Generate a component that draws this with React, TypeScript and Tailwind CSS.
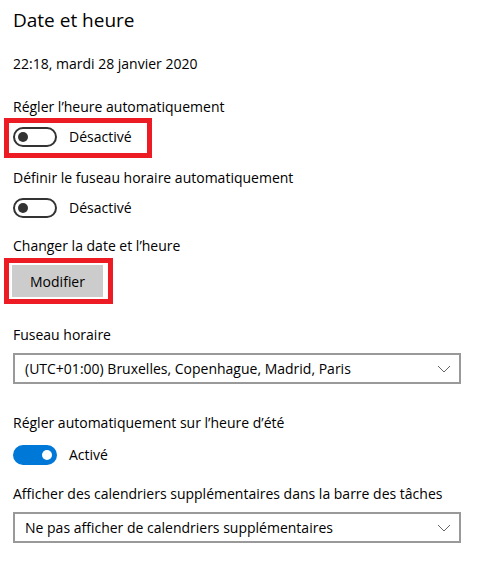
import { ReactNode } from 'react'

const FONT = "font-['Open_Sans','Noto_Sans',sans-serif]"

function Toggle({ on }: { on: boolean }) {
  return (
    <div className="flex h-5 items-center gap-3">
      {on ? (
        <div className="flex h-5 w-11 items-center justify-end rounded-full bg-[#0078d7] pr-[5px]">
          <div className="h-[10px] w-[10px] rounded-full bg-white" />
        </div>
      ) : (
        <div className="flex h-5 w-11 items-center rounded-full border-2 border-[#333] pl-[3px]">
          <div className="h-[10px] w-[10px] rounded-full bg-[#333]" />
        </div>
      )}
      <span className="text-[14px] leading-5 text-black">{on ? 'Activé' : 'Désactivé'}</span>
    </div>
  )
}

function Label({ children, mt }: { children: ReactNode; mt: string }) {
  return <div className={`${mt} text-[14px] leading-5 text-black`}>{children}</div>
}

function Select({ value }: { value: string }) {
  return (
    <div className="flex h-[31px] w-[448px] items-center justify-between border-2 border-[#999] bg-white pl-[10px] pr-[8px]">
      <span className="text-[14px] leading-5 text-black">{value}</span>
      <svg width="14" height="8" viewBox="0 0 14 8" fill="none">
        <path d="M1 1l6 6 6-6" stroke="#666" strokeWidth="1" />
      </svg>
    </div>
  )
}

export default function App() {
  return (
    <div className={`${FONT} h-[563px] w-[495px] bg-white pl-[13px]`}>
      <h1 className="mt-[6px] text-[19px] leading-7 font-normal text-black">Date et heure</h1>
      <Label mt="mt-[20px]">22:18, mardi 28 janvier 2020</Label>

      <Label mt="mt-[23px]">Régler l’heure automatiquement</Label>
      <div className="mt-px -ml-[9px] h-10 w-[148px] border-[5px] border-[#ed1c24] pt-[4px] pl-[4px]">
        <Toggle on={false} />
      </div>

      <Label mt="mt-[10px]">Définir le fuseau horaire automatiquement</Label>
      <div className="mt-[10px]">
        <Toggle on={false} />
      </div>

      <Label mt="mt-[18px]">Changer la date et l’heure</Label>
      <div className="mt-[2px] -ml-[9px] h-[46px] w-[109px] border-[5px] border-[#ed1c24] pt-[2px] pl-[3px]">
        <button className="flex h-8 w-[91px] items-center justify-center bg-[#cccccc] text-[14px] text-black">
          Modifier
        </button>
      </div>

      <Label mt="mt-[21px]">Fuseau horaire</Label>
      <div className="mt-[8px]">
        <Select value="(UTC+01:00) Bruxelles, Copenhague, Madrid, Paris" />
      </div>

      <Label mt="mt-[29px]">Régler automatiquement sur l’heure d’été</Label>
      <div className="mt-[12px]">
        <Toggle on />
      </div>

      <Label mt="mt-[19px]">Afficher des calendriers supplémentaires dans la barre des tâches</Label>
      <div className="mt-[8px]">
        <Select value="Ne pas afficher de calendriers supplémentaires" />
      </div>
    </div>
  )
}
